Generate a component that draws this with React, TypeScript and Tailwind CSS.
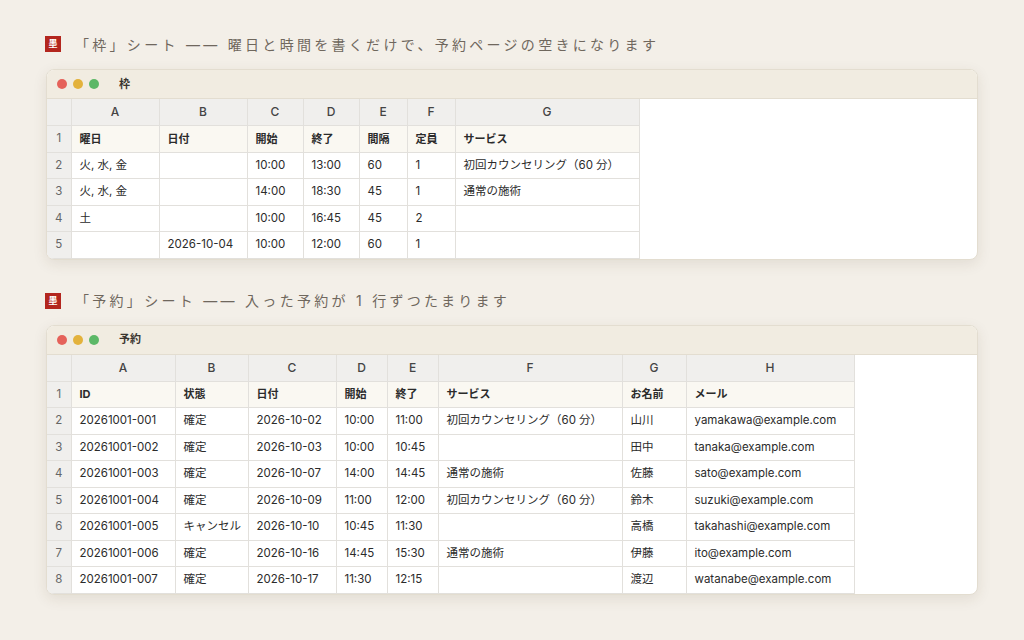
const F = { fontFamily: 'Inter, "Noto Sans CJK JP", sans-serif' };

type Sheet = { title: string; cols: [string, number][]; head: string[]; rows: string[][] };

const waku: Sheet = {
  title: '枠',
  cols: [['A', 88], ['B', 88], ['C', 56], ['D', 56], ['E', 48], ['F', 48], ['G', 184]],
  head: ['曜日', '日付', '開始', '終了', '間隔', '定員', 'サービス'],
  rows: [
    ['火, 水, 金', '', '10:00', '13:00', '60', '1', '初回カウンセリング（60 分）'],
    ['火, 水, 金', '', '14:00', '18:30', '45', '1', '通常の施術'],
    ['土', '', '10:00', '16:45', '45', '2', ''],
    ['', '2026-10-04', '10:00', '12:00', '60', '1', ''],
  ],
};

const yoyaku: Sheet = {
  title: '予約',
  cols: [['A', 104], ['B', 73], ['C', 88], ['D', 51], ['E', 51], ['F', 184], ['G', 64], ['H', 168]],
  head: ['ID', '状態', '日付', '開始', '終了', 'サービス', 'お名前', 'メール'],
  rows: [
    ['20261001-001', '確定', '2026-10-02', '10:00', '11:00', '初回カウンセリング（60 分）', '山川', 'yamakawa@example.com'],
    ['20261001-002', '確定', '2026-10-03', '10:00', '10:45', '', '田中', 'tanaka@example.com'],
    ['20261001-003', '確定', '2026-10-07', '14:00', '14:45', '通常の施術', '佐藤', 'sato@example.com'],
    ['20261001-004', '確定', '2026-10-09', '11:00', '12:00', '初回カウンセリング（60 分）', '鈴木', 'suzuki@example.com'],
    ['20261001-005', 'キャンセル', '2026-10-10', '10:45', '11:30', '', '高橋', 'takahashi@example.com'],
    ['20261001-006', '確定', '2026-10-16', '14:45', '15:30', '通常の施術', '伊藤', 'ito@example.com'],
    ['20261001-007', '確定', '2026-10-17', '11:30', '12:15', '', '渡辺', 'watanabe@example.com'],
  ],
};

function Heading({ text }: { text: string }) {
  return (
    <div className="flex items-center gap-[14px] h-[20px] ml-[45px]">
      <div className="w-[16px] h-[16px] bg-[#b3261e] text-white text-[9px] font-bold flex items-center justify-center">墨</div>
      <div className="text-[14px] tracking-[0.235em] text-[#6f675d]">{text}</div>
    </div>
  );
}

function Window({ s }: { s: Sheet }) {
  const cell = 'border-r border-b border-[#e2e0dc] h-[26.5px] px-2 whitespace-nowrap overflow-hidden';
  const total = 24 + s.cols.reduce((a, [, w]) => a + w, 0);
  return (
    <div className="mx-[46px] rounded-[8px] overflow-hidden bg-white border border-[#e3ddd0] shadow-[0_4px_14px_rgba(80,60,30,0.10)]">
      <div className="h-[29px] bg-[#f1ece1] border-b border-[#e3ddd0] flex items-center px-[10px] gap-[6px]">
        <span className="w-[10px] h-[10px] rounded-full bg-[#e5625a]" />
        <span className="w-[10px] h-[10px] rounded-full bg-[#e3b23c]" />
        <span className="w-[10px] h-[10px] rounded-full bg-[#5cb867]" />
        <span className="ml-[14px] text-[11px] font-bold text-[#3a3530]">{s.title}</span>
      </div>
      <table style={{ width: total }} className="border-collapse text-[11.5px] text-[#2b2b2b] table-fixed">
        <colgroup>
          <col style={{ width: 24 }} />
          {s.cols.map(([c, w]) => <col key={c} style={{ width: w }} />)}
        </colgroup>
        <thead>
          <tr className="bg-[#f0efed] text-[#444]">
            <th className={cell + ' font-medium'} />
            {s.cols.map(([c]) => <th key={c} className={cell + ' font-medium text-center text-[12px]'}>{c}</th>)}
          </tr>
        </thead>
        <tbody>
          <tr className="bg-[#faf8f2]">
            <td className={cell + ' bg-[#f0efed] text-[#666] text-center px-0'}>1</td>
            {s.head.map((h, i) => <td key={i} className={cell + ' font-bold text-[11px]'}>{h}</td>)}
          </tr>
          {s.rows.map((r, ri) => (
            <tr key={ri}>
              <td className={cell + ' bg-[#f0efed] text-[#666] text-center px-0'}>{ri + 2}</td>
              {r.map((v, i) => <td key={i} className={cell}>{v}</td>)}
            </tr>
          ))}
        </tbody>
      </table>
    </div>
  );
}

export default function App() {
  return (
    <div style={F} className="w-[1024px] h-[640px] bg-[#f3efe8] pt-[34px]">
      <Heading text="「枠」シート —— 曜日と時間を書くだけで、予約ページの空きになります" />
      <div className="mt-[15px]"><Window s={waku} /></div>
      <div className="mt-[31px]"><Heading text="「予約」シート —— 入った予約が 1 行ずつたまります" /></div>
      <div className="mt-[14px]"><Window s={yoyaku} /></div>
    </div>
  );
}
